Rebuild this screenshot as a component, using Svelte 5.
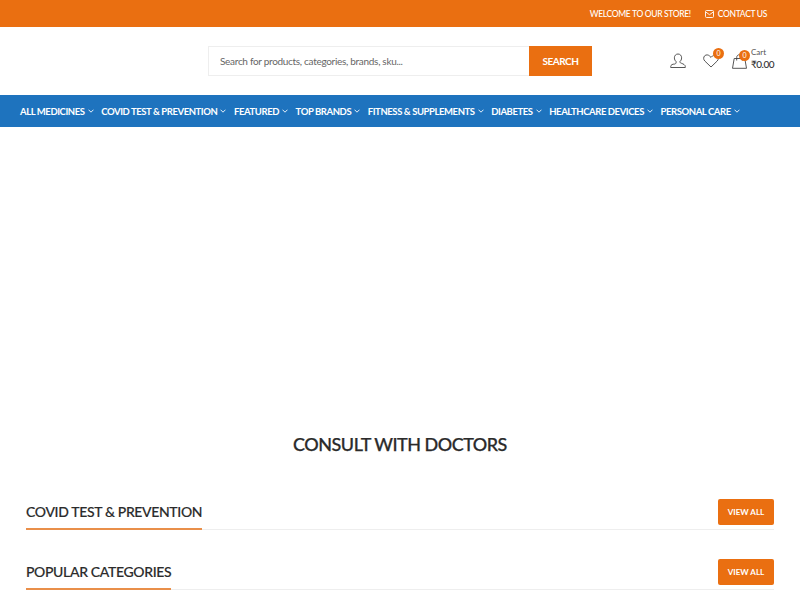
<script lang="ts">
  const navItems = [
    "All Medicines",
    "Covid Test & Prevention",
    "Featured",
    "Top Brands",
    "Fitness & Supplements",
    "Diabetes",
    "Healthcare Devices",
    "Personal Care",
  ];
  const sections = ["Covid Test & Prevention", "Popular Categories"];
</script>

<div class="topbar">
  <span>Welcome to our store!</span>
  <a class="contact" href="#contact">
    <svg width="9" height="8" viewBox="0 0 9 8" fill="none" stroke="currentColor" stroke-width="0.9">
      <rect x="0.5" y="0.5" width="8" height="7" rx="1" />
      <path d="M0.8 2 4.5 4.700 8.200 2" />
    </svg>
    Contact us
  </a>
</div>

<header class="header">
  <form class="search" onsubmit={(e) => e.preventDefault()}>
    <input type="text" placeholder="Search for products, categories, brands, sku..." />
    <button type="submit">Search</button>
  </form>
  <div class="actions">
    <svg class="user" width="16" height="16" viewBox="0 0 16 16" fill="none" stroke="#444" stroke-width="0.9">
      <path d="M8 1c-2.200 0-3.600 1.700-3.600 3.800 0 1.600.7 3 1.700 3.800v1.200c0 .6-.6.9-1.600 1.300C2.700 11 .7 11.800.7 13.600v.9h14.600v-.9c0-1.800-2-2.600-3.800-3.300-1-.4-1.600-.7-1.600-1.300V8.600c1-.8 1.700-2.200 1.700-3.800C11.600 2.700 10.200 1 8 1z" />
    </svg>
    <div class="icon wish">
      <svg width="16" height="14" viewBox="0 0 16 14" fill="none" stroke="#444" stroke-width="0.9">
        <path d="M8 13 1.800 7C.3 5.500.3 3.200 1.700 1.800 3.100.5 5.200.6 6.600 2L8 3.400 9.400 2c1.400-1.400 3.500-1.500 4.900-.2 1.400 1.400 1.400 3.700-.1 5.200z" />
      </svg>
      <span class="badge">0</span>
    </div>
    <div class="icon bag">
      <svg width="15" height="15" viewBox="0 0 15 15" fill="none" stroke="#444" stroke-width="0.9">
        <path d="M2.200 4.500h10.600l1.700 9.800H.5z" />
        <path d="M4.700 6.500V3.500C4.700 1.800 5.900.7 7.500.7s2.800 1.100 2.800 2.800v3" />
      </svg>
      <span class="badge">0</span>
    </div>
    <div class="cart">
      <span class="cart-label">Cart</span>
      <strong>₹0.00</strong>
    </div>
  </div>
</header>

<nav class="nav">
  {#each navItems as item}
    <a href="#nav">
      {item}
      <svg width="6" height="4" viewBox="0 0 6 4" fill="none" stroke="currentColor" stroke-width="0.9">
        <path d="M0.500 0.700 3 3.200 5.500 0.700" />
      </svg>
    </a>
  {/each}
</nav>

<main class="main">
  <h2 class="consult">Consult with doctors</h2>
  {#each sections as title}
    <section class="section">
      <h3><span>{title}</span></h3>
      <a class="view-all" href="#all">View all</a>
    </section>
  {/each}
</main>

<style>
  :global(body) {
    font-family: Lato, "Open Sans", sans-serif;
    color: #222;
    background: #fff;
    overflow: hidden;
  }
  a {
    color: inherit;
    text-decoration: none;
  }
  .topbar {
    height: 27px;
    background: #ea6f11;
    color: #fff;
    display: flex;
    justify-content: flex-end;
    align-items: center;
    gap: 14px;
    padding-right: 33px;
    font-size: 8.500px;
    font-weight: 500;
    letter-spacing: -0.33px;
    text-transform: uppercase;
  }
  .contact {
    display: flex;
    align-items: center;
    gap: 4px;
  }
  .header {
    height: 68px;
    display: flex;
    align-items: center;
    padding-left: 208px;
    padding-right: 26px;
    box-sizing: border-box;
  }
  .search {
    display: flex;
    width: 384px;
    height: 30px;
  }
  .search input {
    flex: 1;
    min-width: 0;
    border: 1px solid #eee;
    border-right: 0;
    outline: none;
    padding: 0 11px;
    font: 400 10px Lato, sans-serif;
    letter-spacing: -0.3px;
    color: #555;
  }
  .search input::placeholder {
    color: #666;
    opacity: 1;
  }
  .search button {
    width: 63px;
    border: 0;
    background: #ea6f11;
    color: #fff;
    font: 700 10px Lato, sans-serif;
    letter-spacing: -0.5px;
    text-transform: uppercase;
    padding: 0;
  }
  .actions {
    margin-left: auto;
    display: flex;
    align-items: center;
  }
  .user {
    margin-right: 17px;
  }
  .icon {
    position: relative;
    display: flex;
  }
  .wish {
    margin-right: 13px;
  }
  .badge {
    position: absolute;
    top: -6px;
    right: -5px;
    width: 11px;
    height: 11px;
    border-radius: 50%;
    background: #ea6f11;
    color: #fff;
    font-size: 7px;
    line-height: 11px;
    text-align: center;
  }
  .bag .badge {
    top: -4px;
    right: -3px;
  }
  .cart {
    display: flex;
    flex-direction: column;
    width: 23px;
    margin-left: 4px;
    margin-top: -6px;
    font-size: 10px;
    line-height: 12px;
  }
  .cart-label {
    font-size: 8px;
    color: #555;
    line-height: 11px;
  }
  .cart strong {
    font-weight: 500;
    color: #333;
    letter-spacing: -0.5px;
  }
  .nav {
    height: 32px;
    background: #1e73be;
    color: #fff;
    display: flex;
    align-items: center;
    gap: 7.600px;
    padding-left: 20px;
    font-size: 9.500px;
    font-weight: 700;
    letter-spacing: -0.42px;
    text-transform: uppercase;
    white-space: nowrap;
  }
  .nav a {
    display: flex;
    align-items: center;
    gap: 3px;
  }
  .main {
    padding: 0 26px;
  }
  .consult {
    margin: 0;
    padding-top: 305px;
    height: 24px;
    line-height: 24px;
    text-align: center;
    font-size: 18px;
    font-weight: 500;
    letter-spacing: -0.5px;
    -webkit-text-stroke: 0.25px #2b2b2b;
    text-transform: uppercase;
    color: #2b2b2b;
  }
  .section {
    display: flex;
    justify-content: space-between;
    align-items: flex-start;
    height: 30px;
    border-bottom: 1px solid #eee;
    margin-top: 29px;
  }
  .consult + .section {
    margin-top: 43px;
  }
  .section h3 {
    margin: 0;
    font-size: 14px;
    font-weight: 500;
    letter-spacing: -0.35px;
    -webkit-text-stroke: 0.15px #2b2b2b;
    text-transform: uppercase;
    color: #2b2b2b;
  }
  .section h3 span {
    display: block;
    height: 29px;
    line-height: 26px;
    border-bottom: 2px solid #e98f4a;
  }
  .view-all {
    width: 56px;
    height: 26px;
    border-radius: 2px;
    background: #ea6f11;
    color: #fff;
    font-size: 8px;
    font-weight: 700;
    line-height: 26px;
    text-align: center;
    text-transform: uppercase;
  }
</style>
